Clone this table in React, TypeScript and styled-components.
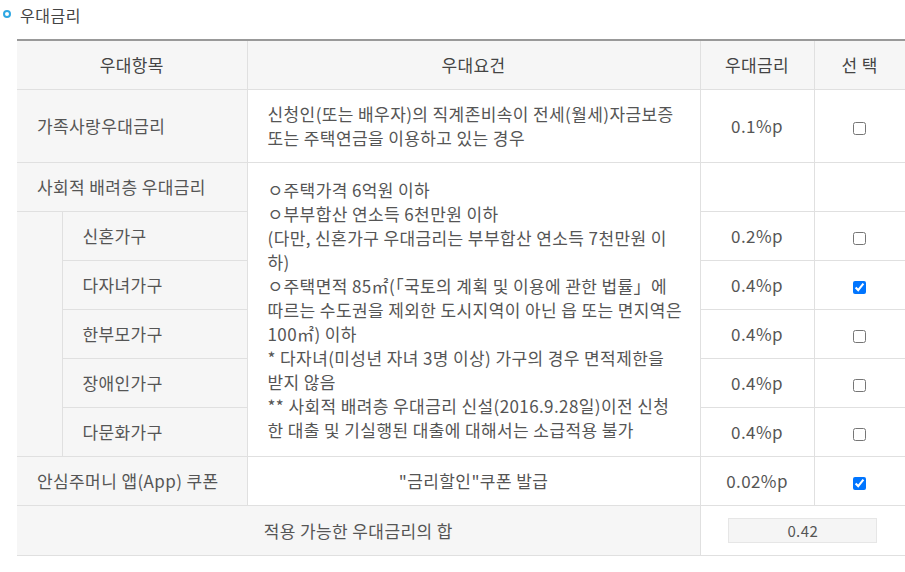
import React from "react";
import styled, { createGlobalStyle } from "styled-components";

const GlobalStyle = createGlobalStyle`
  body {
    margin: 0;
    background: #fff;
    font-family: "Noto Sans CJK KR", "Noto Sans", sans-serif;
    color: #555;
  }
`;

const Section = styled.section`
  width: 905px;
  overflow: hidden;
`;

const Title = styled.h3`
  display: flex;
  align-items: center;
  gap: 9px;
  margin: 0 0 12px;
  padding: 3px 0 0 3px;
  height: 24px;
  font-size: 16px;
  font-weight: 400;
  line-height: 24px;
  letter-spacing: 0.5px;
  color: #444;
`;

const Bullet = styled.span`
  width: 4px;
  height: 4px;
  border: 2px solid #2ea7e3;
  border-radius: 50%;
  margin-top: -3px;
`;

const Table = styled.table`
  width: 888px;
  margin-left: 17px;
  border-collapse: collapse;
  table-layout: fixed;
  border-top: 2px solid #999;
  border-left: hidden;
  border-right: hidden;
  font-size: 17px;
  line-height: 24px;
  letter-spacing: 0.4px;
`;

const Th = styled.th`
  padding: 12px 10px;
  background: #f6f6f6;
  border: 1px solid #e0e0e0;
  font-weight: 400;
  color: #444;
  text-align: center;
`;

const Td = styled.td<{ $align?: "left" | "center"; $gray?: boolean }>`
  padding: 12px 20px;
  border: 1px solid #e0e0e0;
  background: ${(p) => (p.$gray ? "#f6f6f6" : "#fff")};
  text-align: ${(p) => p.$align || "center"};
  vertical-align: middle;
  white-space: nowrap;
`;

const Line = styled.span`
  display: block;
`;

const Check = styled.input`
  margin: 0;
  width: 13px;
  height: 13px;
  vertical-align: middle;
`;

const ValueBox = styled.div`
  width: 147px;
  height: 23px;
  margin: 0 auto;
  background: #f5f5f5;
  border: 1px solid #e6e6e6;
  font-size: 15px;
  line-height: 23px;
  color: #555;
  text-align: center;
`;

const familyLines = [
  "신청인(또는 배우자)의 직계존비속이 전세(월세)자금보증",
  "또는 주택연금을 이용하고 있는 경우",
];

const socialLines = [
  "ㅇ주택가격 6억원 이하",
  "ㅇ부부합산 연소득 6천만원 이하",
  "(다만, 신혼가구 우대금리는 부부합산 연소득 7천만원 이",
  "하)",
  "ㅇ주택면적 85㎡(「국토의 계획 및 이용에 관한 법률」에",
  "따르는 수도권을 제외한 도시지역이 아닌 읍 또는 면지역은",
  "100㎡) 이하",
  "* 다자녀(미성년 자녀 3명 이상) 가구의 경우 면적제한을",
  "받지 않음",
  "** 사회적 배려층 우대금리 신설(2016.9.28일)이전 신청",
  "한 대출 및 기실행된 대출에 대해서는 소급적용 불가",
];

const subRows = [
  { name: "신혼가구", rate: "0.2%p", checked: false },
  { name: "다자녀가구", rate: "0.4%p", checked: true },
  { name: "한부모가구", rate: "0.4%p", checked: false },
  { name: "장애인가구", rate: "0.4%p", checked: false },
  { name: "다문화가구", rate: "0.4%p", checked: false },
];

export default function App() {
  return (
    <Section>
      <GlobalStyle />
      <Title>
        <Bullet />
        우대금리
      </Title>
      <Table>
        <colgroup>
          <col style={{ width: 45 }} />
          <col style={{ width: 185 }} />
          <col style={{ width: 453 }} />
          <col style={{ width: 114 }} />
          <col style={{ width: 91 }} />
        </colgroup>
        <thead>
          <tr>
            <Th colSpan={2}>우대항목</Th>
            <Th>우대요건</Th>
            <Th>우대금리</Th>
            <Th>선 택</Th>
          </tr>
        </thead>
        <tbody>
          <tr>
            <Td colSpan={2} $gray $align="left">
              가족사랑우대금리
            </Td>
            <Td $align="left">
              {familyLines.map((l) => (
                <Line key={l}>{l}</Line>
              ))}
            </Td>
            <Td>0.1%p</Td>
            <Td>
              <Check type="checkbox" />
            </Td>
          </tr>
          <tr>
            <Td colSpan={2} $gray $align="left">
              사회적 배려층 우대금리
            </Td>
            <Td rowSpan={6} $align="left">
              {socialLines.map((l) => (
                <Line key={l}>{l}</Line>
              ))}
            </Td>
            <Td />
            <Td />
          </tr>
          {subRows.map((r, i) => (
            <tr key={r.name}>
              {i === 0 && <Td rowSpan={5} $gray />}
              <Td $gray $align="left">
                {r.name}
              </Td>
              <Td>{r.rate}</Td>
              <Td>
                <Check type="checkbox" defaultChecked={r.checked} />
              </Td>
            </tr>
          ))}
          <tr>
            <Td colSpan={2} $gray $align="left">
              안심주머니 앱(App) 쿠폰
            </Td>
            <Td>"금리할인"쿠폰 발급</Td>
            <Td>0.02%p</Td>
            <Td>
              <Check type="checkbox" defaultChecked />
            </Td>
          </tr>
          <tr>
            <Td colSpan={3} $gray>
              적용 가능한 우대금리의 합
            </Td>
            <Td colSpan={2}>
              <ValueBox>0.42</ValueBox>
            </Td>
          </tr>
        </tbody>
      </Table>
    </Section>
  );
}
